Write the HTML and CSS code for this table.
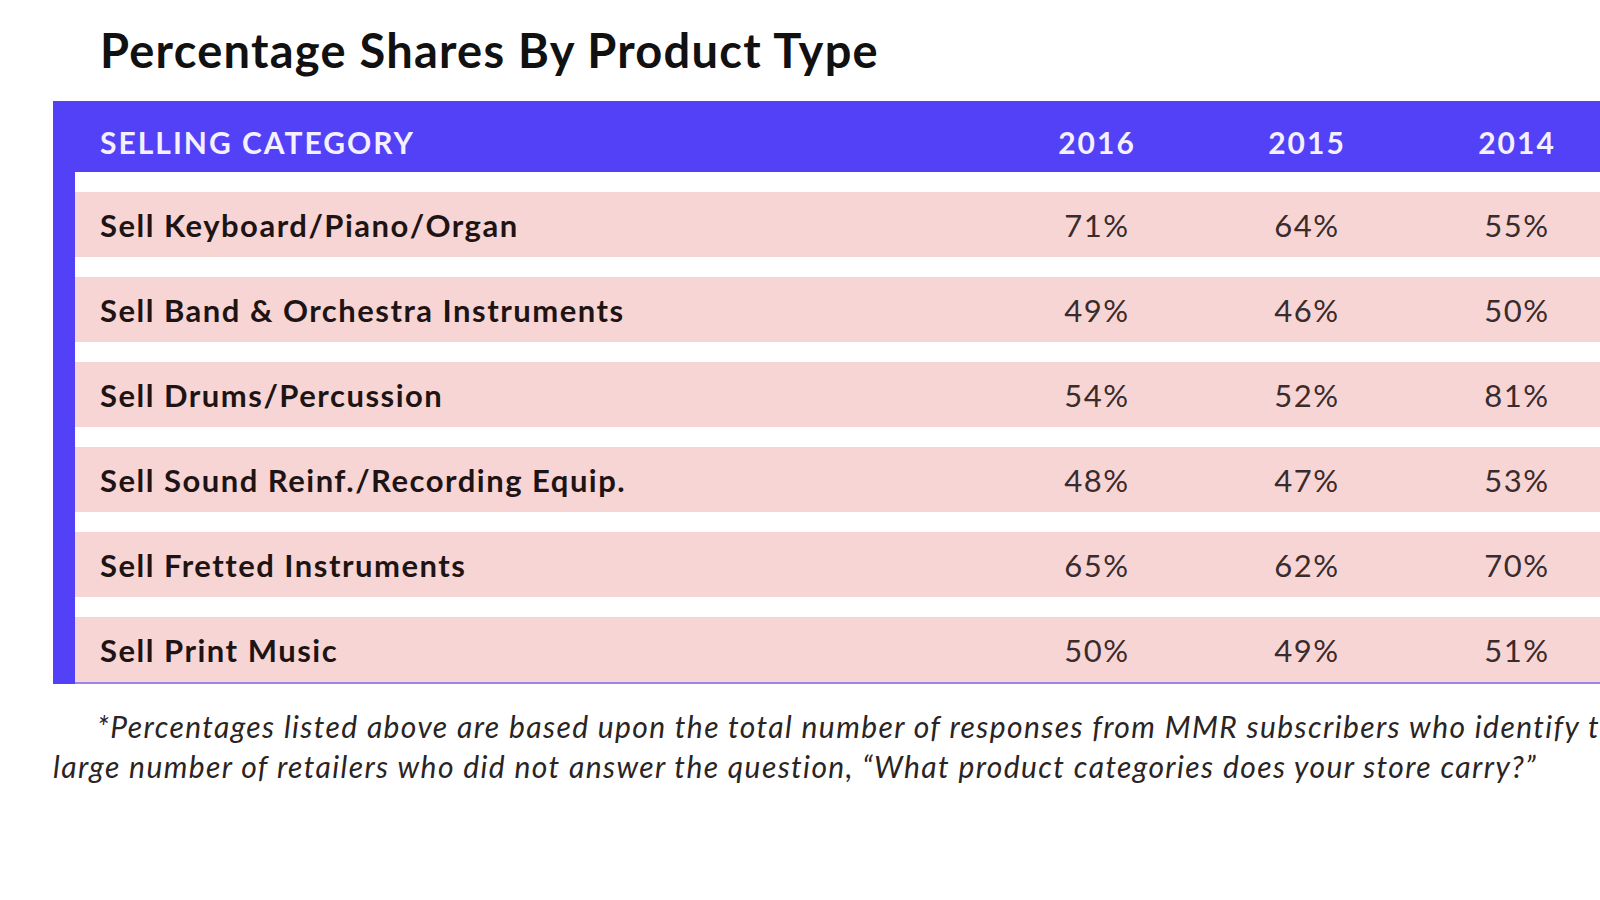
FILE: index.html
```html
<!DOCTYPE html>
<html lang="en">
<head>
<meta charset="utf-8">
<title>Percentage Shares By Product Type</title>
<link rel="stylesheet" href="styles.css">
</head>
<body>
<div class="page">
  <h1 class="title">Percentage Shares By Product Type</h1>
  <div class="table">
    <div class="head">
      <div class="cell label">SELLING CATEGORY</div>
      <div class="cell num">2016</div>
      <div class="cell num">2015</div>
      <div class="cell num">2014</div>
    </div>
    <div class="body">
      <div class="row">
        <div class="cell label">Sell Keyboard/Piano/Organ</div>
        <div class="cell num">71%</div><div class="cell num">64%</div><div class="cell num">55%</div>
      </div>
      <div class="row">
        <div class="cell label">Sell Band &amp; Orchestra Instruments</div>
        <div class="cell num">49%</div><div class="cell num">46%</div><div class="cell num">50%</div>
      </div>
      <div class="row">
        <div class="cell label">Sell Drums/Percussion</div>
        <div class="cell num">54%</div><div class="cell num">52%</div><div class="cell num">81%</div>
      </div>
      <div class="row">
        <div class="cell label">Sell Sound Reinf./Recording Equip.</div>
        <div class="cell num">48%</div><div class="cell num">47%</div><div class="cell num">53%</div>
      </div>
      <div class="row">
        <div class="cell label">Sell Fretted Instruments</div>
        <div class="cell num">65%</div><div class="cell num">62%</div><div class="cell num">70%</div>
      </div>
      <div class="row last">
        <div class="cell label">Sell Print Music</div>
        <div class="cell num">50%</div><div class="cell num">49%</div><div class="cell num">51%</div>
      </div>
    </div>
  </div>
  <p class="note">
    <span class="line first">*Percentages listed above are based upon the total number of responses from MMR subscribers who identify themselves as retailers, and do not include the</span>
    <span class="line">large number of retailers who did not answer the question, “What product categories does your store carry?”</span>
  </p>
</div>
</body>
</html>
```
FILE: styles.css
```css
html, body {
  margin: 0;
  padding: 0;
  background: #ffffff;
  overflow: hidden;
}
.page {
  width: 1600px;
  height: 900px;
  overflow: hidden;
  font-family: Lato, "Open Sans", sans-serif;
  color: #1c1414;
}
.title {
  margin: 0;
  padding: 23px 0 0 100px;
  height: 101px;
  box-sizing: border-box;
  font-size: 47px;
  line-height: 54px;
  font-weight: 700;
  letter-spacing: 1.25px;
  color: #111111;
  white-space: nowrap;
}
.table {
  margin-left: 53px;
  width: 1600px;
  background: #5241f7;
  padding: 0 0 0 22px;
  box-sizing: border-box;
}
.head {
  display: grid;
  grid-template-columns: 917px 210px 210px 210px;
  height: 71px;
  margin-left: -22px;
  padding-left: 22px;
  align-items: center;
  color: #f4f0ff;
  font-weight: 700;
  font-size: 30px;
  letter-spacing: 2px;
}
.head .cell { padding-top: 10px; }
.head .label { padding-left: 25px; }
.body {
  background: #ffffff;
  padding-top: 20px;
  border-bottom: 2px solid #9d86ea;
}
.row {
  display: grid;
  grid-template-columns: 917px 210px 210px 210px;
  height: 65px;
  align-items: center;
  background: #f8d5d5;
  font-size: 31px;
  letter-spacing: 1.5px;
  margin-bottom: 20px;
}
.row.last { margin-bottom: 0; }
.row .label {
  padding-left: 25px;
  font-weight: 700;
  color: #1e1414;
  white-space: nowrap;
}
.num { text-align: center; }
.row .num {
  font-weight: 400;
  color: #3a2c2c;
}
.note {
  margin: 22px 0 0 53px;
  font-style: italic;
  font-size: 30px;
  line-height: 40px;
  color: #2a2424;
  letter-spacing: 1.4px;
}
.line {
  display: block;
  white-space: nowrap;
}
.line.first { padding-left: 44px; }
```
